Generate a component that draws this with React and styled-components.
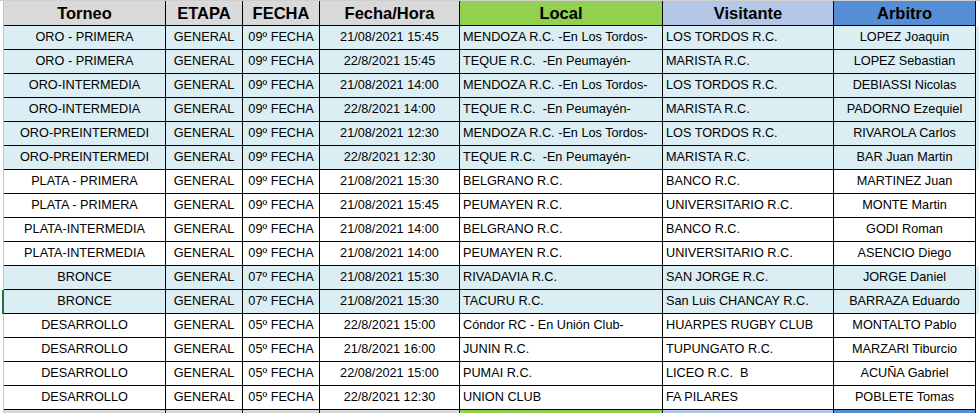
import styled, { createGlobalStyle } from 'styled-components';

const GlobalStyle = createGlobalStyle`
  html, body {
    margin: 0;
    padding: 0;
    background: #fff;
  }
  body {
    font-family: "Liberation Sans", Arial, sans-serif;
    color: #000;
  }
`;

const columns = [
  { key: 'torneo', label: 'Torneo', width: 162, align: 'center', head: '#d9d9d9' },
  { key: 'etapa', label: 'ETAPA', width: 77, align: 'center', head: '#d9d9d9' },
  { key: 'fecha', label: 'FECHA', width: 77, align: 'center', head: '#d9d9d9' },
  { key: 'hora', label: 'Fecha/Hora', width: 140, align: 'center', head: '#d9d9d9' },
  { key: 'local', label: 'Local', width: 203, align: 'left', head: '#92d050' },
  { key: 'visitante', label: 'Visitante', width: 171, align: 'left', head: '#b4c7e7' },
  { key: 'arbitro', label: 'Arbitro', width: 142, align: 'center', head: '#558ed5' },
];

const gridCols = columns.map((c) => `${c.width}px`).join(' ');

const matches = [
  ['ORO - PRIMERA', 'GENERAL', '09º FECHA', '21/08/2021 15:45', 'MENDOZA R.C. -En Los Tordos-', 'LOS TORDOS R.C.', 'LOPEZ Joaquin', true],
  ['ORO - PRIMERA', 'GENERAL', '09º FECHA', '22/8/2021 15:45', 'TEQUE R.C.  -En Peumayén-', 'MARISTA R.C.', 'LOPEZ Sebastian', true],
  ['ORO-INTERMEDIA', 'GENERAL', '09º FECHA', '21/08/2021 14:00', 'MENDOZA R.C. -En Los Tordos-', 'LOS TORDOS R.C.', 'DEBIASSI Nicolas', true],
  ['ORO-INTERMEDIA', 'GENERAL', '09º FECHA', '22/8/2021 14:00', 'TEQUE R.C.  -En Peumayén-', 'MARISTA R.C.', 'PADORNO Ezequiel', true],
  ['ORO-PREINTERMEDI', 'GENERAL', '09º FECHA', '21/08/2021 12:30', 'MENDOZA R.C. -En Los Tordos-', 'LOS TORDOS R.C.', 'RIVAROLA Carlos', true],
  ['ORO-PREINTERMEDI', 'GENERAL', '09º FECHA', '22/8/2021 12:30', 'TEQUE R.C.  -En Peumayén-', 'MARISTA R.C.', 'BAR Juan Martin', true],
  ['PLATA - PRIMERA', 'GENERAL', '09º FECHA', '21/08/2021 15:30', 'BELGRANO R.C.', 'BANCO R.C.', 'MARTINEZ Juan', false],
  ['PLATA - PRIMERA', 'GENERAL', '09º FECHA', '21/08/2021 15:45', 'PEUMAYEN R.C.', 'UNIVERSITARIO R.C.', 'MONTE Martin', false],
  ['PLATA-INTERMEDIA', 'GENERAL', '09º FECHA', '21/08/2021 14:00', 'BELGRANO R.C.', 'BANCO R.C.', 'GODI Roman', false],
  ['PLATA-INTERMEDIA', 'GENERAL', '09º FECHA', '21/08/2021 14:00', 'PEUMAYEN R.C.', 'UNIVERSITARIO R.C.', 'ASENCIO Diego', false],
  ['BRONCE', 'GENERAL', '07º FECHA', '21/08/2021 15:30', 'RIVADAVIA R.C.', 'SAN JORGE R.C.', 'JORGE Daniel', true],
  ['BRONCE', 'GENERAL', '07º FECHA', '21/08/2021 15:30', 'TACURU R.C.', 'San Luis CHANCAY R.C.', 'BARRAZA Eduardo', true, true],
  ['DESARROLLO', 'GENERAL', '05º FECHA', '22/8/2021 15:00', 'Cóndor RC - En Unión Club-', 'HUARPES RUGBY CLUB', 'MONTALTO Pablo', false],
  ['DESARROLLO', 'GENERAL', '05º FECHA', '21/8/2021 16:00', 'JUNIN R.C.', 'TUPUNGATO R.C.', 'MARZARI Tiburcio', false],
  ['DESARROLLO', 'GENERAL', '05º FECHA', '22/08/2021 15:00', 'PUMAI R.C.', 'LICEO R.C.  B', 'ACUÑA Gabriel', false],
  ['DESARROLLO', 'GENERAL', '05º FECHA', '22/8/2021 12:30', 'UNION CLUB', 'FA PILARES', 'POBLETE Tomas', false],
];

const Sheet = styled.div`
  height: 413px;
  width: 980px;
  overflow: hidden;
  border-top: 1px solid #d0d0d0;
  box-sizing: border-box;
  padding-left: 3px;
`;

const Table = styled.div`
  width: 976px;
  border-left: 1px solid #c6c6c6;
  box-sizing: border-box;
`;

const Row = styled.div`
  position: relative;
  display: grid;
  grid-template-columns: ${gridCols};
  background: ${(p) => (p.$tinted ? '#daeef3' : '#fff')};

  &::before {
    content: '';
    display: ${(p) => (p.$selected ? 'block' : 'none')};
    position: absolute;
    left: -2px;
    top: 0;
    width: 2px;
    height: 100%;
    background: #1e7145;
  }
`;

const HeadCell = styled.div`
  height: 25px;
  box-sizing: border-box;
  border-right: 1px solid #000;
  border-bottom: 1px solid #000;
  background: ${(p) => p.$bg};
  font-weight: bold;
  font-size: 16.5px;
  line-height: 24px;
  text-align: center;
  white-space: nowrap;
  overflow: hidden;
`;

/* colour band of the repeated header that starts at the bottom edge */
const BandCell = styled.div`
  height: 4px;
  border-right: 1px solid #000;
  background: ${(p) => p.$bg};
`;

const Cell = styled.div`
  height: 24px;
  box-sizing: border-box;
  border-right: 1px solid #000;
  border-bottom: 1px solid #000;
  padding: 0 3px;
  font-size: 12.7px;
  line-height: 23px;
  text-align: ${(p) => p.$align};
  white-space: pre;
  overflow: hidden;
`;

export default function App() {
  return (
    <>
      <GlobalStyle />
      <Sheet>
        <Table>
          <Row>
            {columns.map((c) => (
              <HeadCell key={c.key} $bg={c.head}>
                {c.label}
              </HeadCell>
            ))}
          </Row>
          {matches.map((m, i) => (
            <Row key={i} $tinted={m[7]} $selected={m[8]}>
              {columns.map((c, j) => (
                <Cell key={c.key} $align={c.align}>
                  {m[j]}
                </Cell>
              ))}
            </Row>
          ))}
          <Row>
            {columns.map((c) => (
              <BandCell key={c.key} $bg={c.head} />
            ))}
          </Row>
        </Table>
      </Sheet>
    </>
  );
}
